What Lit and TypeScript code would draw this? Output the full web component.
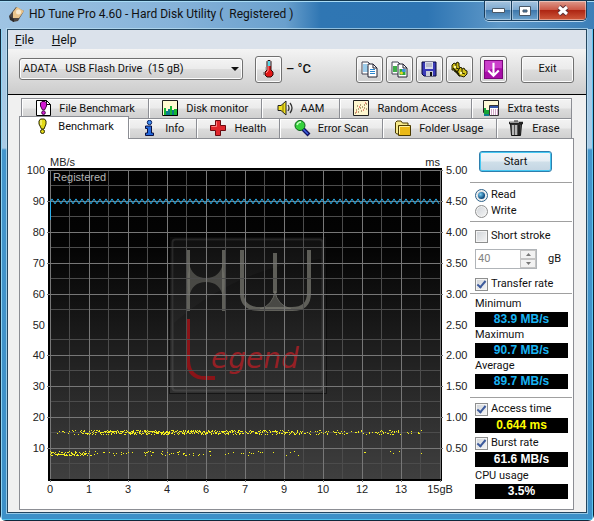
import { LitElement, html, svg, css } from "lit";
import { customElement } from "lit/decorators.js";

const icons = {
  disk: svg`<path d="M1 10 8 1l8 4-6 10-5 1z" fill="#4b4540"/><path d="M5 6 9 1l7 4-5 7-6 0z" fill="#e9c48c"/><circle cx="10.500" cy="6" r="2.500" fill="#f8ead0"/><path d="M1 10l5 3 0 3-4-2z" fill="#2d2a2a"/>`,
  thermo: svg`<path d="M7 1.500 8 .5h2l1 1V10l2 2v3l-2 2H7l-2-2v-3l2-2z" fill="#e31616" stroke="#2a0a0a"/><path d="M7.500 1h3v5h-3z" fill="#59d6e4"/><path d="M8 6v5l-2 2" fill="none" stroke="#ff9a9a"/><path d="M3.500 12v3M6 7v3" stroke="#999"/>`,
  copy: svg`<path d="M1 1h6l3 3v9H1z" fill="#fff" stroke="#445"/><path d="M2 4h4M2 6h5M2 8h5M2 10h5" stroke="#3a9ad8"/><path d="M7 3h5l4 4v9H7z" fill="#fff" stroke="#223"/><path d="M12 3v4h4" fill="none" stroke="#223"/><path d="M9 8.500h5M9 10.500h5M9 12.500h5" stroke="#2a86d0"/>`,
  copyImage: svg`<path d="M1 1h6l3 3v9H1z" fill="#fff" stroke="#445"/><path d="M2 5h4v6H2z" fill="#3fae49"/><path d="M7 3h5l4 4v9H7z" fill="#fff" stroke="#223"/><path d="M12 3v4h4" fill="none" stroke="#223"/><path d="M8.500 8h6v6h-6z" fill="#2fa637"/><path d="M11 8h3.500v3H11z" fill="#3e8fe0"/><circle cx="10.500" cy="12" r="1.500" fill="#e8d82a"/>`,
  save: svg`<path d="M1 1h14v14H3l-2-2z" fill="#3a3ab8" stroke="#08083a"/><path d="M4 1h8v7H4z" fill="#d8dcea"/><path d="M5 3h6M5 5h6" stroke="#99a"/><path d="M5 10h7v5H5z" fill="#c9ccd8"/><path d="M9 11h2v4H9z" fill="#111"/>`,
  gears: svg`<g stroke="#221f00"><path d="M1 4 3 2l2 1 1-2 2 1v3l1 2-2 3-3 1-1-2-2 0z" fill="#c9b814"/><path d="M8 8l2-2 1 2 2-1 1 2 2 1v3l-3 3-3-1-2 0-2-3z" fill="#d6c41a"/><path d="M5 3v4l3 1M11 8v4l3 1" fill="none"/></g><path d="M2 7l6 6M4 10l5 5" stroke="#221f00" stroke-width="1.300"/><circle cx="4" cy="6" r="1.200" fill="#fff9a8"/><circle cx="10" cy="12" r="1.200" fill="#fff9a8"/>`,
  down: svg`<path d="M0 0h18v18H0z" fill="#a80fa8"/><path d="M0 0h18v8Q9 6 0 12z" fill="#cb3fcb"/><path d="M9 2.500V15M4 10l5 5 5-5" fill="none" stroke="#fff" stroke-width="2"/><path d="M.5.5h17v17H.5z" fill="none" stroke="#7a087a"/>`,
  fileBench: svg`<path d="M1.500.5h10l4 4v11h-14z" fill="#fff" stroke="#000"/><path d="M11.500.5v4h4" fill="none" stroke="#000"/><path d="M5.500 3l1.500-1.500h3L11.500 3v3l-2 4H7.500l-2-4z" fill="#d31ad3" stroke="#400040"/><circle cx="8.500" cy="12.700" r="1.800" fill="#d31ad3" stroke="#400040"/>`,
  monitor: svg`<path d="M.5.5h15v15H.5z" fill="#fffbd2" stroke="#222"/><path d="M2 15V8h2v7zM8 15V6h2v9zM12 15V9h3v6z" fill="#16b832"/><path d="M4 15v-4h2v4zM6 15V9h2v6zM10 15v-5h2v5z" fill="#0c7c8c"/><path d="M15.500 1v14.500H1" fill="none" stroke="#000"/>`,
  speaker: svg`<path d="M1 5.500h3l5-4.500v14L4 10.500H1z" fill="#f0e020" stroke="#222"/><path d="M6 4v8" stroke="#807000"/><path d="M11 5q2 3 0 6M13 3q4 5 0 10" fill="none" stroke="#333" stroke-width="1.300"/>`,
  scatter: svg`<path d="M.5.5h15v15H.5z" fill="#fff7cf" stroke="#222"/><path d="M2 13h1M3 10h1M5 12h1M5 9h1M7 8h1M8 11h1M9 7h1M11 8h1M11 5h1M13 4h1M7 5h1M13 9h1M4 6h1" stroke="#6b4a20"/><path d="M3 12h1M6 7h1M10 10h1M12 3h1" stroke="#d22"/>`,
  extra: svg`<path d="M.5.5h15v12H.5z" fill="#fff9d8" stroke="#222"/><path d="M1 8h2v6H1zM3 10h3v4H3z" fill="#17a535"/><path d="M1 15h5" stroke="#0c7c8c" stroke-width="2"/><path d="M6.500 5.500h9v10h-9z" fill="#fff" stroke="#333"/><path d="M7 7h8" stroke="#3355aa" stroke-width="2"/><path d="M8 10h7M8 12h7M8 14h7" stroke="#a04a90" stroke-dasharray="1 1"/>`,
  exclaim: svg`<path d="M5 3l1.500-2h4L12 3v3l-2 5H7.500L5 6z" fill="#e3da18" stroke="#2b2900"/><path d="M7 2v5" stroke="#fffcb0"/><circle cx="8.500" cy="13.500" r="2" fill="#e3da18" stroke="#2b2900"/>`,
  info: svg`<circle cx="8.500" cy="2.500" r="2.200" fill="#3f8ff0" stroke="#0a1d60"/><path d="M4.500 6h6v7h2v2.500h-8V13h2V8.500h-2z" fill="#2468dc" stroke="#0a1040"/>`,
  health: svg`<path d="M5.500.5h5v5h5v5h-5v5h-5v-5h-5v-5h5z" fill="#e0262c" stroke="#6a0a10"/><path d="M6.500 1.500v5h-5" fill="none" stroke="#ff8080"/>`,
  magnify: svg`<path d="M9 9l6 6" stroke="#101060" stroke-width="4"/><path d="M9 9l5 5" stroke="#3c60e0" stroke-width="1.500"/><circle cx="6" cy="5.500" r="5" fill="#35d13c" stroke="#0b5c18"/><path d="M3 5q1-3 4-3" fill="none" stroke="#c4ffc0" stroke-width="1.500"/>`,
  folder: svg`<path d="M.5 2.500 2 1h4l1.500 2H13v11H2l-1.500-1z" fill="#f6e98a" stroke="#4a3a00"/><path d="M3.500 5.500h12v10h-12z" fill="#eab918" stroke="#4a3a00"/><path d="M4.500 14V6.500h10" fill="none" stroke="#fff2a0"/>`,
  trash: svg`<path d="M2.500 4h11l-1 11.500h-9z" fill="#555" stroke="#111"/><path d="M5 5v10M8 5v10" stroke="#d8d8d8" stroke-width="1.500"/><path d="M11 5v10" stroke="#222" stroke-width="2"/><path d="M1 3h14" stroke="#222" stroke-width="2.500"/><path d="M2 2.500h9" stroke="#999"/><path d="M6 1h4" stroke="#222"/>`,
};

type IconName = keyof typeof icons;
const icon = (name: IconName, size = 17) =>
  html`<svg class="icon" width=${size} height=${size} viewBox="0 0 ${name === "down" || name === "thermo" ? "18 18" : "17 17"}" aria-hidden="true">${icons[name]}</svg>`;

const backTabs: [IconName, string][] = [
  ["fileBench", "File Benchmark"],
  ["monitor", "Disk monitor"],
  ["speaker", "AAM"],
  ["scatter", "Random Access"],
  ["extra", "Extra tests"],
];
const frontTabs: [IconName, string][] = [
  ["exclaim", "Benchmark"],
  ["info", "Info"],
  ["health", "Health"],
  ["magnify", "Error Scan"],
  ["folder", "Folder Usage"],
  ["trash", "Erase"],
];

/* Plot area inside the chart drawing: origin and extent. */
const X0 = 3;
const Y0 = 2;
const W = 390;
const H = 310;

function random(seed: number) {
  let s = seed;
  return () => (s = (s * 16807) % 2147483647) / 2147483647;
}

function accessDots() {
  const r = random(4711);
  let d = "";
  const dot = (x: number, y: number) => (d += `M${Math.round(x)} ${Math.round(y)}h1v1h-1z`);
  for (let x = 7; x < 372; x++) {
    const density = x < 30 ? 0.9 : x < 50 ? 1.5 : x < 190 ? 2.3 : x < 250 ? 1.6 : x < 350 ? 1 : 0.35;
    for (let k = 0; k < 3; k++) if (r() < density / 3) dot(X0 + x, 263 + r() * 4);
  }
  for (let x = 0; x < 376; x++) {
    const density = x < 18 ? 2.5 : x < 42 ? 1.6 : x < 130 ? 0.5 : x < 215 ? 0.3 : 0.05;
    for (let k = 0; k < 3; k++) if (r() < density / 3) dot(X0 + x, 284 + r() * 4);
  }
  return d;
}

function speedLine() {
  let d = `M${X0 + 0.5} 52V34`;
  for (let x = 2, up = true; x <= W; x += 3, up = !up) d += `L${X0 + x} ${up ? 31 : 36}`;
  return d;
}

@customElement("hd-chart")
export class HdChart extends LitElement {
  static styles = css`
    :host {
      display: grid;
      grid-template: 29px minmax(0, 1fr) 27px / 27px minmax(0, 1fr) 27px;
      flex: 1;
      min-width: 0;
      font-family: "Liberation Sans", Arial, sans-serif;
      font-size: 11px;
      color: #222;
    }
    .units {
      grid-column: 2;
      display: flex;
      justify-content: space-between;
      align-items: flex-end;
      padding: 0 3px;
      line-height: 11px;
    }
    .scale {
      grid-row: 2;
      display: flex;
      flex-direction: column;
      padding: 2px 0 3px;
      line-height: 0;
    }
    .scale span {
      flex: 1;
    }
    .left {
      grid-column: 1;
      text-align: right;
      padding-right: 2px;
    }
    .right {
      grid-column: 3;
      padding-left: 3px;
    }
    .plot {
      grid-area: 2 / 2;
      position: relative;
      display: grid;
      grid-template: minmax(0, 1fr) / minmax(0, 1fr);
      background: linear-gradient(#000, #040404 25%, #404040);
    }
    .lines {
      position: absolute;
      inset: 0;
      width: 100%;
      height: 100%;
    }
    .logo {
      grid-area: 1 / 1;
      place-self: center;
      margin: 0 0 20px 6px;
    }
    .state {
      grid-area: 1 / 1;
      padding: 3px 6px;
      line-height: 13px;
      color: #b4b4b4;
      z-index: 1;
    }
    .bottom {
      grid-area: 3 / 2;
      display: flex;
      justify-content: space-between;
      padding: 0 3px;
      line-height: 14px;
    }
    .bottom span {
      width: 0;
      display: flex;
      justify-content: center;
    }
  `;

  render() {
    const steps = Array.from({ length: 11 }, (_, i) => i);
    return html`
      <div class="units"><span>MB/s</span><span>ms</span></div>
      <div class="scale left">
        ${steps.slice(0, 10).map((i) => html`<span>${100 - i * 10}</span>`)}
      </div>
      <div class="plot">
        <svg class="logo" width="160" height="160" viewBox="0 0 160 160" aria-hidden="true">
          <rect x="1.500" y="1.500" width="157" height="157" fill="#fff" fill-opacity=".035" stroke="#000" stroke-opacity=".5" />
          <rect x="4.500" y="4.500" width="150" height="151" rx="3" fill="none" stroke="#888" stroke-opacity=".22" stroke-width="2" />
          <path d="M6 88Q70 32 153 24V6H6z" fill="#fff" fill-opacity=".025" />
          <g fill="none" stroke="#77776f" stroke-opacity=".75" stroke-width="4">
            <path d="M20 15V76M56 15V76" />
            <path d="M74 15V58Q74 74 92 74H124Q141 74 141 58V15M107 18V58" />
            <path d="M107 56Q105 70 92 74H123Q109 70 107 56z" fill="#77776f" fill-opacity=".5" stroke-width="1" />
          </g>
          <path d="M21 26Q24 43 38 43T55 26V64Q52 47 38 47T21 64z" fill="none" />
          <path d="M21 28Q24 43 38 43T55 28V34Q58 45 55 62Q52 47 38 47T21 62Q18 45 21 34z" fill="#77776f" fill-opacity=".5" />
          <path d="M20 84V126Q21 143 37 143H47" fill="none" stroke="#8a1418" stroke-width="4" />
          <text x="43" y="133" fill="#952025" font-family="DejaVu Sans, sans-serif" font-style="italic" font-weight="200" font-size="28">egend</text>
        </svg>
        <span class="state">Registered</span>
        <svg class="lines" viewBox="0 0 396 315" preserveAspectRatio="none" aria-hidden="true">
          <g shape-rendering="crispEdges">
            <path d="M0 0H396V2H0zM0 312H396V315H0zM0 0H3V315H0zM394 0H396V315H394z" fill="#000" />
            <path d="M0 0H1V315H0zM0 314H396V315H0zM395 0H396V315H395z" fill="#fff" />
            ${steps.slice(0, 10).map(
              (i) => svg`<path d="M${X0 + i * 39 + 19} ${Y0}v${H}h1V${Y0}z" fill="#4c4c4c"/>
                <path d="M${X0} ${Y0 + i * 31 + 15}h${W}v1H${X0}z" fill="#4c4c4c"/>`
            )}
            ${steps.map(
              (i) => svg`<path d="M${X0 + i * 39} ${Y0}h1v${H}h-1zM${X0 + i * 39} 313h1v2h-1z" fill="#777"/>
                ${i < 10 ? svg`<path d="M0 ${Y0 + i * 31}h396v1H0z" fill="#777"/>` : null}`
            )}
            <path d=${accessDots()} fill="#f4f01c" />
          </g>
          <path d=${speedLine()} fill="none" stroke="#2cb2ee" stroke-width="1" />
        </svg>
      </div>
      <div class="scale right">
        ${steps.slice(0, 10).map((i) => html`<span>${(5 - i * 0.5).toFixed(2)}</span>`)}
      </div>
      <div class="bottom">
        ${["0", "1", "3", "4", "6", "7", "9", "10", "12", "13", "15gB"].map((t) => html`<span>${t}</span>`)}
      </div>
    `;
  }
}

@customElement("app-root")
export class AppRoot extends LitElement {
  static styles = css`
    :host {
      display: flex;
      flex-direction: column;
      box-sizing: border-box;
      min-height: 100vh;
      padding: 0 7px 8px;
      font: 11px/16px Roboto, "Liberation Sans", sans-serif;
      color: #111;
      border-radius: 6px;
      background: linear-gradient(90deg, #10283c 1px, #8fd4f4 1px, #8fd4f4 2px, transparent 2px, transparent calc(100% - 2px), #5cc4f0 calc(100% - 2px), #5cc4f0 calc(100% - 1px), #0b2030 calc(100% - 1px)),
        linear-gradient(0deg, #10283c 1px, #4ec3ee 1px, #4ec3ee 2px, transparent 2px),
        linear-gradient(#a3c6e4 0, #a9cbe6 148px, #4596cc 150px, #3d90c8 100%);
    }
    button,
    input,
    select {
      font: inherit;
      color: inherit;
      margin: 0;
      box-sizing: border-box;
    }
    .title {
      display: flex;
      align-items: flex-start;
      gap: 4px;
      height: 29px;
      margin: 0 -7px;
      padding: 0 7px 0 8px;
      box-sizing: border-box;
      border-top: 1px solid #14384f;
      box-shadow: inset 0 1px #a9dcf6;
      background: linear-gradient(90deg, #9fc4e3, #85b2d9 30%, #6aa0cd 48%, #2f76b3 54%, #2e75b3 72%, #5e98c8 84%, #3c7fb8);
      font-size: 12px;
      line-height: 27px;
    }
    .title .icon {
      margin-top: 5px;
    }
    .title h1 {
      flex: 1;
      margin: 0;
      font: inherit;
      white-space: pre;
    }
    .controls {
      display: flex;
      height: 19px;
      border: 1px solid #193d5c;
      border-top: 0;
      border-radius: 0 0 5px 5px;
      box-shadow: 0 1px #b5d5ee;
      overflow: hidden;
    }
    .controls button {
      width: 27px;
      padding: 0;
      display: grid;
      place-items: center;
      border: 0;
      border-right: 1px solid #193d5c;
      background: linear-gradient(#a5c4df, #7ea9cf 45%, #3f78ac 50%, #6ea3cd);
      box-shadow: inset 0 0 0 1px #ffffff66;
    }
    .controls .close {
      width: 47px;
      border: 0;
      background: linear-gradient(#dd9a8c, #cc5a48 45%, #ae2613 50%, #cf5a3c);
    }
    .client {
      flex: 1;
      display: flex;
      flex-direction: column;
      border: 1px solid #24465f;
      box-shadow: 0 0 0 1px #bfe2f5aa;
      background: #f0f0f0;
    }
    .menu {
      display: flex;
      height: 19px;
      padding: 0 1px;
      background: #dbe2eb;
      font-size: 12px;
      line-height: 20px;
    }
    .menu button {
      padding: 0 6px;
      margin-right: 6px;
      border: 0;
      background: none;
    }
    .toolbar {
      display: flex;
      align-items: center;
      height: 46px;
      padding: 0 12px 5px 11px;
      box-sizing: border-box;
      border-bottom: 1px solid #000;
      background: linear-gradient(#f4f4f4, #ccc);
    }
    .button {
      padding: 0;
      border: 1px solid #707070;
      border-radius: 3px;
      background: linear-gradient(#f4f4f4, #ebebeb 48%, #dcdcdc 52%, #cfcfcf);
      box-shadow: inset 0 0 0 1px #fcfcfc;
    }
    .drive {
      display: grid;
      align-items: center;
      flex: 0 1 224px;
      margin-right: 12px;
    }
    .drive select {
      grid-area: 1 / 1;
      appearance: none;
      width: 100%;
      height: 22px;
      padding: 0 20px 0 3px;
      white-space: pre;
    }
    .drive svg {
      grid-area: 1 / 1;
      justify-self: end;
      margin-right: 4px;
      pointer-events: none;
    }
    .square {
      width: 27px;
      height: 27px;
      display: grid;
      place-items: center;
    }
    .temp {
      flex: 1;
      margin-left: 4px;
      font-size: 13px;
      font-weight: 500;
      white-space: pre;
    }
    .tools {
      display: flex;
      gap: 3px;
    }
    .last {
      margin-left: 4px;
    }
    .exit {
      width: 53px;
      height: 27px;
      margin-left: 14px;
    }
    .body {
      flex: 1;
      display: flex;
      flex-direction: column;
      padding: 3px 12px 2px 11px;
    }
    .tabs {
      display: grid;
      height: 20px;
      margin-right: 2px;
    }
    .back {
      grid-template-columns: 128fr 113fr 77fr 132fr 100fr;
      margin-left: 2px;
    }
    .front {
      grid-template-columns: 110fr 68fr 83fr 102fr 114fr 75fr;
    }
    .tab {
      display: flex;
      align-items: center;
      justify-content: center;
      gap: 7px;
      min-width: 0;
      padding: 0;
      border: 1px solid #8c8e94;
      border-width: 1px 1px 0 0;
      background: linear-gradient(#f3f3f3, #ebebeb 48%, #dcdcdc 52%, #d0d0d0);
      box-shadow: inset 1px 1px #fff;
      white-space: nowrap;
    }
    .tab:first-child {
      border-left-width: 1px;
    }
    .tab.active {
      z-index: 1;
      margin: -2px 0 -1px;
      padding-bottom: 3px;
      background: #fff;
    }
    .panel {
      flex: 1;
      display: flex;
      border: 1px solid #8c8e94;
      background: #fff;
    }
    .side {
      display: flex;
      flex-direction: column;
      width: 102px;
      padding: 12px 1px 4px 0;
      white-space: nowrap;
    }
    .start {
      width: 73px;
      height: 21px;
      margin: 0 9px 10px;
      border-color: #2e7fae;
      background: linear-gradient(#f2f6f9, #e6eef4 48%, #cfdfe9 52%, #c3d5e3);
      box-shadow: inset 0 0 0 1px #46c8f2;
    }
    .group {
      display: flex;
      flex-direction: column;
      padding: 2px 4px 2px 5px;
      border-top: 1px solid #a0a0a0;
    }
    .modes {
      padding-top: 4px;
    }
    .limits {
      padding: 5px 4px 0 5px;
    }
    .rates {
      padding-bottom: 8px;
    }
    .row {
      display: flex;
      align-items: center;
      gap: 3px;
      height: 18px;
    }
    .modes .row {
      height: 16px;
    }
    input[type="checkbox"],
    input[type="radio"] {
      appearance: none;
      flex: none;
      width: 13px;
      height: 13px;
      display: grid;
      place-items: center;
      border: 1px solid #8e8f8f;
      background: linear-gradient(135deg, #cfd3d8, #f6f6f6);
      box-shadow: inset 0 0 0 1px #f4f4f4;
    }
    input[type="radio"] {
      border-radius: 50%;
    }
    input[type="checkbox"]:checked::before {
      content: "";
      width: 3px;
      height: 7px;
      margin-bottom: 2px;
      border: solid #3c5a9c;
      border-width: 0 2px 2px 0;
      transform: rotate(40deg);
    }
    input[type="radio"]:checked {
      border-color: #2c628b;
    }
    input[type="radio"]:checked::before {
      content: "";
      width: 7px;
      height: 7px;
      border-radius: 50%;
      background: radial-gradient(circle at 35% 35%, #7cd0f4, #0e4c80 65%);
    }
    .stroke {
      display: flex;
      align-items: center;
      gap: 11px;
      height: 20px;
      margin: 4px 0 6px;
    }
    .spin {
      display: flex;
      width: 62px;
      height: 20px;
      box-sizing: border-box;
      border: 1px solid #b0b4b8;
    }
    .spin input {
      appearance: textfield;
      flex: 1;
      width: 0;
      padding: 0 2px;
      border: 0;
      background: none;
      color: #838383;
    }
    .arrows {
      display: flex;
      flex-direction: column;
    }
    .arrows button {
      flex: 1;
      width: 16px;
      padding: 0;
      display: grid;
      place-items: center;
      border: 1px solid #c4c4c4;
      background: #f2f2f2;
    }
    output {
      display: block;
      height: 15px;
      background: #000;
      text-align: center;
      font: bold 12px/15px "Liberation Sans", Arial, sans-serif;
    }
    .label {
      height: 16px;
    }
    .extra output {
      margin-bottom: 1px;
    }
    .cyan {
      color: #18b4f4;
    }
    .yellow {
      color: #ff0;
    }
    .white {
      color: #fff;
    }
  `;

  private tab([name, text]: [IconName, string], active = false) {
    return html`<button class="tab ${active ? "active" : ""}" role="tab" aria-selected=${active}>${icon(name)}${text}</button>`;
  }

  private rate(text: string, value: string) {
    return html`<label class="label" for=${text}>${text}</label><output id=${text} class="cyan">${value}</output>`;
  }

  render() {
    return html`
      <header class="title">
        ${icon("disk")}
        <h1>HD Tune Pro 4.60 - Hard Disk Utility (  Registered )</h1>
        <div class="controls">
          <button aria-label="Minimize"><svg width="13" height="6"><path d="M.5.5h12v4H.5z" fill="#fff" stroke="#4a5866" /></svg></button>
          <button aria-label="Maximize"><svg width="12" height="10"><path d="M.5.5h11v9H.5zM4 4v2h4V4z" fill="#fff" fill-rule="evenodd" stroke="#4a5866" /></svg></button>
          <button class="close" aria-label="Close"><svg width="14" height="11"><path d="M3 2l8 7M11 2l-8 7" stroke="#5b3036" stroke-width="5" /><path d="M3 2l8 7M11 2l-8 7" stroke="#fff" stroke-width="3" /></svg></button>
        </div>
      </header>
      <main class="client">
        <nav class="menu">
          <button><u>F</u>ile</button>
          <button><u>H</u>elp</button>
        </nav>
        <div class="toolbar">
          <div class="drive">
            <select class="button" aria-label="Drive">
              <option>ADATA\u00a0\u00a0 USB Flash Drive\u00a0 (15 gB)</option>
            </select>
            <svg width="8" height="4" aria-hidden="true"><path d="M0 0h8L4 4z" fill="#111" /></svg>
          </div>
          <button class="button square" aria-label="Temperature">${icon("thermo", 18)}</button>
          <span class="temp">– °C</span>
          <div class="tools">
            <button class="button square" aria-label="Copy text">${icon("copy")}</button>
            <button class="button square" aria-label="Copy image">${icon("copyImage")}</button>
            <button class="button square" aria-label="Save">${icon("save")}</button>
            <button class="button square" aria-label="Options">${icon("gears")}</button>
            <button class="button square last" aria-label="Minimize to tray">${icon("down", 19)}</button>
          </div>
          <button class="button exit">Exit</button>
        </div>
        <div class="body">
          <div class="tabs back" role="tablist">${backTabs.map((t) => this.tab(t))}</div>
          <div class="tabs front" role="tablist">${frontTabs.map((t, i) => this.tab(t, i === 0))}</div>
          <section class="panel">
            <hd-chart></hd-chart>
            <aside class="side">
              <button class="button start">Start</button>
              <div class="group modes">
                <label class="row"><input type="radio" name="mode" checked />Read</label>
                <label class="row"><input type="radio" name="mode" />Write</label>
              </div>
              <div class="group limits">
                <label class="row"><input type="checkbox" />Short stroke</label>
                <div class="stroke">
                  <span class="spin">
                    <input id="size" type="number" value="40" disabled />
                    <span class="arrows">
                      <button disabled aria-label="Increase"><svg width="5" height="3"><path d="M0 3h5L2.500 0z" fill="#777" /></svg></button>
                      <button disabled aria-label="Decrease"><svg width="5" height="3"><path d="M0 0h5L2.500 3z" fill="#777" /></svg></button>
                    </span>
                  </span>
                  <label for="size">gB</label>
                </div>
                <label class="row"><input type="checkbox" checked />Transfer rate</label>
              </div>
              <div class="group rates">
                ${this.rate("Minimum", "83.9 MB/s")} ${this.rate("Maximum", "90.7 MB/s")} ${this.rate("Average", "89.7 MB/s")}
              </div>
              <div class="group extra">
                <label class="row"><input type="checkbox" checked />Access time</label>
                <output class="yellow">0.644 ms</output>
                <label class="row"><input type="checkbox" checked />Burst rate</label>
                <output class="white">61.6 MB/s</output>
                <label class="label" for="cpu">CPU usage</label>
                <output id="cpu" class="white">3.5%</output>
              </div>
            </aside>
          </section>
        </div>
      </main>
    `;
  }
}
